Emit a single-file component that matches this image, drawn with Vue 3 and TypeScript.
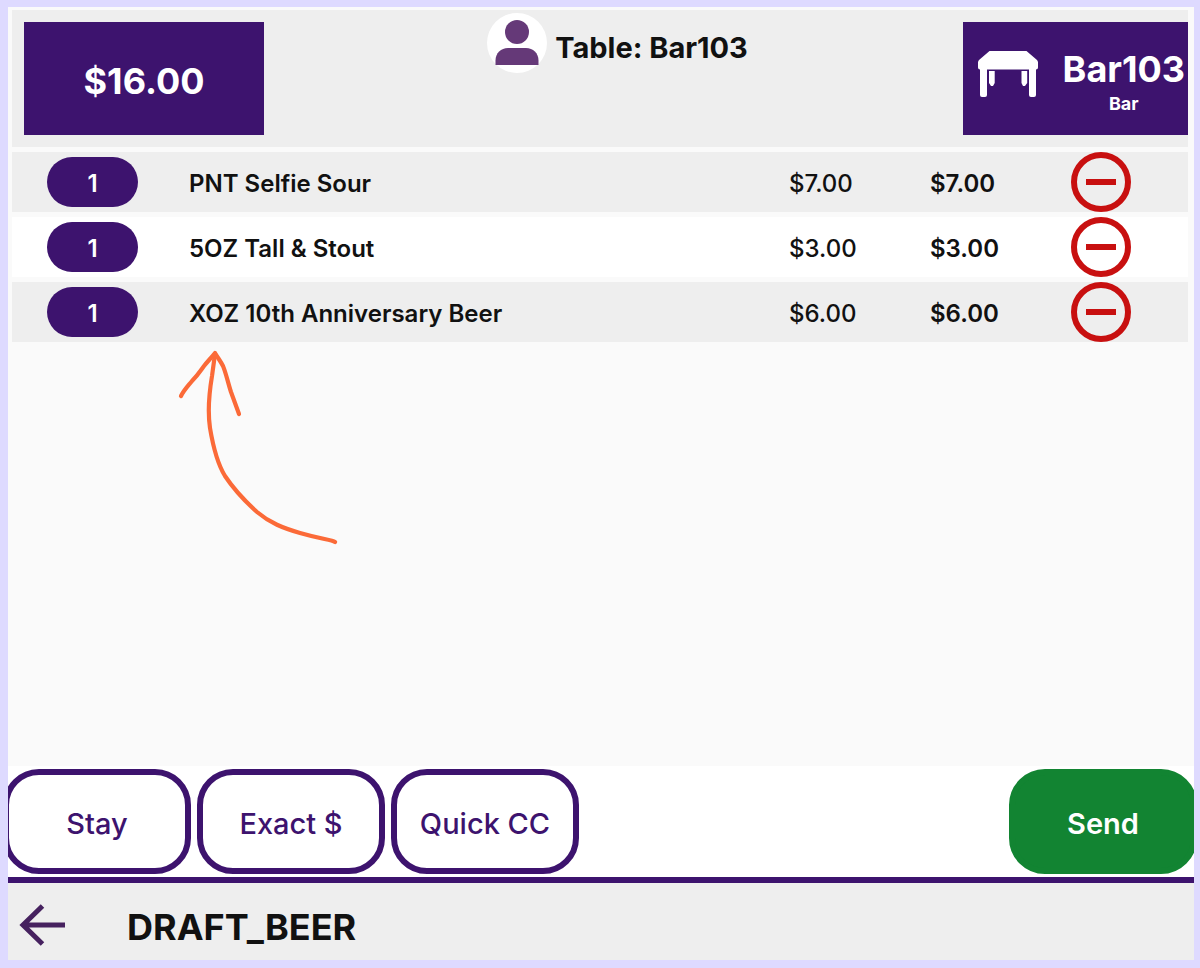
<script setup lang="ts">
interface OrderLine {
  id: number
  qty: number
  name: string
  price: number
}

const lines: OrderLine[] = [
  { id: 1, qty: 1, name: 'PNT Selfie Sour', price: 7 },
  { id: 2, qty: 1, name: '5OZ Tall & Stout', price: 3 },
  { id: 3, qty: 1, name: 'XOZ 10th Anniversary Beer', price: 6 },
]

const actions: string[] = ['Stay', 'Exact $', 'Quick CC']

const money = (value: number): string => `$${value.toFixed(2)}`
const total = lines.reduce((sum, line) => sum + line.qty * line.price, 0)
</script>

<template>
  <div class="frame">
    <header class="top">
      <button type="button" class="total">{{ money(total) }}</button>
      <div class="seat">
        <svg class="avatar" viewBox="0 0 60 60" aria-hidden="true">
          <circle cx="30" cy="30" r="30" fill="#fff" />
          <circle cx="30" cy="19" r="12" fill="#653978" />
          <path d="M8.500 52V47.500C8.500 40 14 35 21 35H39C46 35 51.500 40 51.500 47.500V52Z" fill="#653978" />
        </svg>
        <h1>Table: Bar103</h1>
      </div>
      <button type="button" class="table-btn">
        <svg class="table-icon" viewBox="0 0 60 48" aria-hidden="true">
          <path d="M11.500 1H48.500L59 10Q60 11 60 12.500V17.500Q60 19.500 58 19.500V45Q58 47 56 47H53Q51 47 51 45V19.500H9V45Q9 47 7 47H4Q2 47 2 45V19.500Q0 19.500 0 17.500V12.500Q0 11 1 10Z" fill="#fff" />
          <path d="M11 21H16.700V33L15 36H13L11 33ZM43.500 21H49.200V33L47 36H45L43.500 33Z" fill="#fff" />
        </svg>
        <span class="table-text">
          <span class="table-name">Bar103</span>
          <span class="table-area">Bar</span>
        </span>
      </button>
    </header>

    <main class="order">
      <table class="items" aria-label="Order items">
        <colgroup>
          <col class="c-qty" />
          <col />
          <col class="c-price" />
          <col class="c-total" />
          <col class="c-remove" />
        </colgroup>
        <tbody>
          <tr v-for="line in lines" :key="line.id">
            <td><button type="button" class="qty">{{ line.qty }}</button></td>
            <td class="name">{{ line.name }}</td>
            <td class="price">{{ money(line.price) }}</td>
            <td class="sum">{{ money(line.qty * line.price) }}</td>
            <td>
              <button type="button" class="remove" :aria-label="`Remove ${line.name}`">
                <svg viewBox="0 0 60 60" aria-hidden="true">
                  <circle cx="30" cy="30" r="27" fill="none" stroke="#c81010" stroke-width="6" />
                  <path d="M15 30H45" stroke="#c81010" stroke-width="6" />
                </svg>
              </button>
            </td>
          </tr>
        </tbody>
      </table>
      <svg class="pointer" viewBox="0 0 170 200" aria-hidden="true">
        <g fill="none" stroke="#fb6a38" stroke-width="4.200" stroke-linecap="round" stroke-linejoin="round">
          <path d="M164 192C161 190 150 189 129 183C112 178 99 173 86 162C76 153 62 138 54 126C46 113 41 90 39 78C36 58 39 38 41 26L44 4" />
          <path d="M10 46C13 40 17 36 21 31C27 25 30 20 33 16C37 11 40 8 44 3C47 8 50 12 52 16C55 23 57 33 60 42L68 64" />
        </g>
      </svg>
    </main>

    <nav class="actions" aria-label="Order actions">
      <button v-for="label in actions" :key="label" type="button" class="action">{{ label }}</button>
      <button type="button" class="action send">Send</button>
    </nav>

    <footer class="category">
      <button type="button" class="back" aria-label="Back">
        <svg viewBox="0 0 46 42" aria-hidden="true">
          <path d="M46 21H4M23.500 2L4 21L23.500 40" fill="none" stroke="#46215f" stroke-width="5" />
        </svg>
      </button>
      <h2>DRAFT_BEER</h2>
    </footer>
  </div>
</template>

<style>
body {
  margin: 0;
}
</style>

<style scoped>
.frame {
  box-sizing: border-box;
  display: flex;
  flex-direction: column;
  min-height: 100vh;
  overflow: hidden;
  border: solid #dedaff;
  border-width: 7px 6px 8px 8px;
  background: #fafafa;
  color: #111;
  font-family: Inter, "Liberation Sans", sans-serif;
}

button {
  margin: 0;
  padding: 0;
  border: 0;
  background: none;
  color: inherit;
  font: inherit;
  cursor: pointer;
}

svg {
  display: block;
}

h1,
h2 {
  margin: 0;
  font-weight: 700;
}

.top {
  display: grid;
  grid-template-columns: 240px 1fr 225px;
  box-sizing: border-box;
  height: 137px;
  margin: 3px 6px 0 4px;
  padding: 12px 0 12px 12px;
  background: #eee;
}

.total {
  padding-top: 4px;
  background: #3d136e;
  color: #fff;
  font-size: 36px;
  font-weight: 700;
}

.seat {
  display: flex;
  align-items: center;
  align-self: start;
  justify-content: center;
  gap: 8px;
  height: 60px;
  margin-top: -9px;
  padding-left: 8px;
}

.avatar {
  width: 60px;
  height: 60px;
}

h1 {
  padding-top: 10px;
  font-size: 29px;
  line-height: 36px;
}

.table-btn {
  display: flex;
  align-items: center;
  justify-content: space-between;
  padding: 0 3px 0 15px;
  background: #3d136e;
  color: #fff;
  font-weight: 700;
}

.table-icon {
  width: 60px;
  height: 48px;
  margin-bottom: 9px;
}

.table-text {
  display: flex;
  flex-direction: column;
  align-items: center;
  padding-top: 6px;
}

.table-name {
  font-size: 36px;
  line-height: 44px;
}

.table-area {
  font-size: 18px;
  line-height: 26px;
}

.order {
  position: relative;
  flex: 1;
  margin: 0 6px 0 4px;
}

.items {
  width: 100%;
  border-spacing: 0 5px;
  table-layout: fixed;
}

.c-qty {
  width: 177px;
}

.c-price {
  width: 141px;
}

.c-total {
  width: 141px;
}

.c-remove {
  width: 117px;
}

td {
  height: 60px;
  padding: 0;
  background: #fff;
  font-size: 24px;
  line-height: 30px;
}

tr:nth-child(odd) td {
  background: #eee;
}

.qty {
  display: block;
  width: 91px;
  height: 50px;
  margin-left: 35px;
  padding-top: 3px;
  border-radius: 25px;
  background: #3d136e;
  color: #fff;
  font-weight: 600;
}

.name,
.sum {
  font-weight: 600;
}

.price {
  font-weight: 500;
}

.name,
.price,
.sum {
  padding-top: 3px;
  height: 57px;
}

.remove {
  display: block;
  width: 60px;
  height: 60px;
}

.pointer {
  position: absolute;
  top: 203px;
  left: 159px;
  width: 170px;
  height: 200px;
  pointer-events: none;
}

.actions {
  display: flex;
  gap: 6px;
  margin: 0 -3px 0 -5px;
  padding: 3px 0;
  background: #fff;
}

.action {
  box-sizing: border-box;
  width: 188px;
  height: 105px;
  padding-top: 4px;
  border: 6px solid #3d136e;
  border-radius: 36px;
  background: #fff;
  color: #3d136e;
  font-size: 29px;
  font-weight: 500;
}

.send {
  margin-left: auto;
  border-color: #128432;
  background: #128432;
  color: #fff;
  font-weight: 600;
}

.category {
  display: flex;
  align-items: center;
  gap: 62px;
  box-sizing: border-box;
  height: 83px;
  padding: 6px 11px 0;
  border-top: 6px solid #3d136e;
  background: #eee;
}

.back svg {
  width: 46px;
  height: 42px;
}

h2 {
  padding-top: 4px;
  font-size: 36px;
  line-height: 44px;
}
</style>
